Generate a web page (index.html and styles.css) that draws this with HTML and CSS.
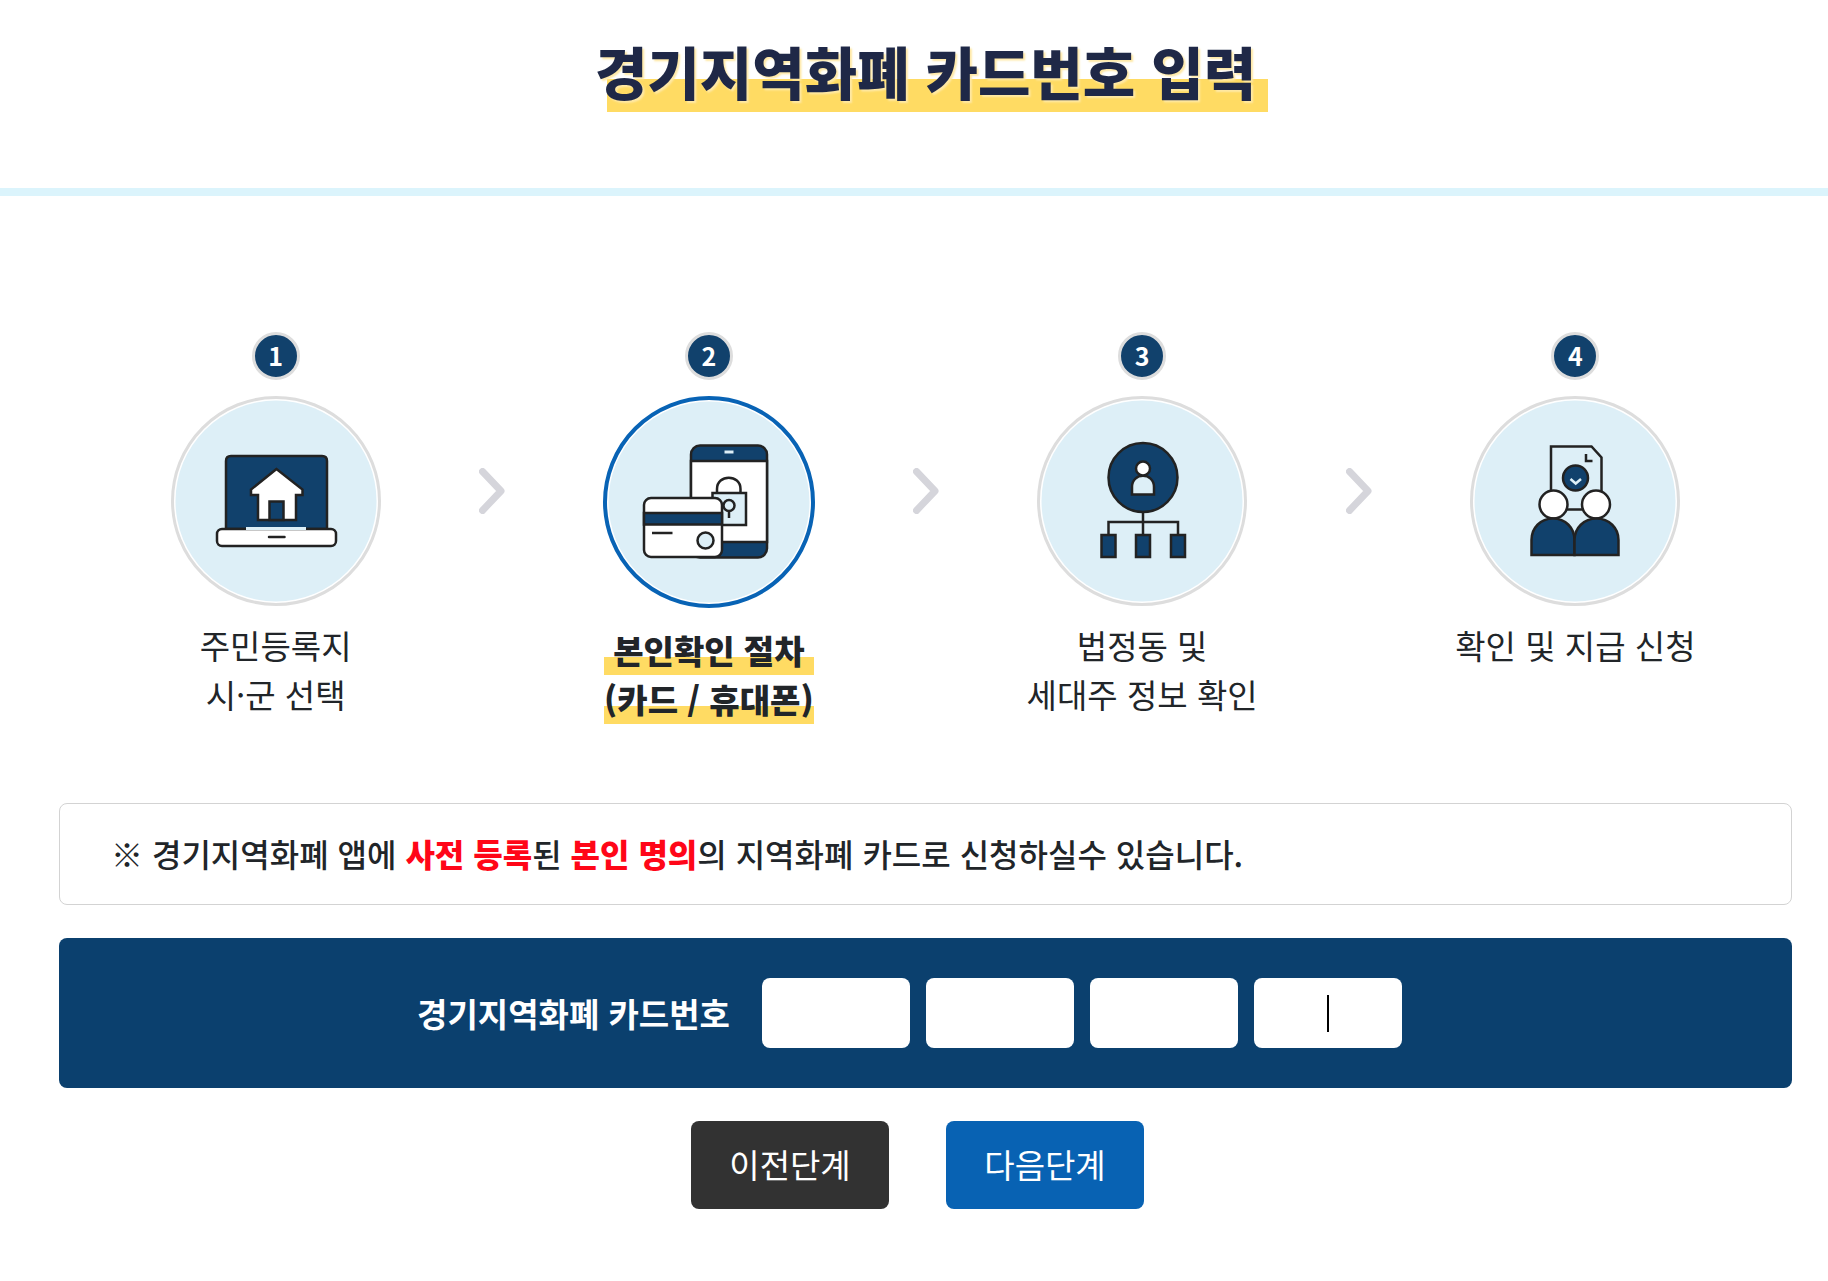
FILE: index.html
```html
<!DOCTYPE html>
<html lang="ko">
<head>
    <meta charset="UTF-8">
    <meta name="viewport" content="width=device-width, initial-scale=1.0">
    <title>경기지역화폐 카드번호 입력</title>
    <link rel="stylesheet" href="styles.css">
</head>
<body>
    <header class="page-header">
        <h1 class="page-title">경기지역화폐 카드번호 입력</h1>
    </header>

    <main class="container">
        <ol class="steps">
            <li class="step">
                <span class="step-num">1</span>
                <div class="step-icon">
                    <svg viewBox="0 0 204 204" aria-hidden="true">
                        <circle class="bg" cx="102" cy="102" r="100.500"/>
                        <path class="navy line" d="M52 130V62q0-5 5-5h91q5 0 5 5v68z"/>
                        <rect class="white line" x="43" y="130" width="119" height="17" rx="5"/>
                        <path d="M72 129.500h60" stroke="#ddeff7" stroke-width="3"/>
                        <path class="white line" d="M102.500 70L77 90.500V96h7v25h38V96h6.500v-5.500z"/>
                        <path class="navy line" d="M95.500 121v-18.500h14V121z"/>
                        <path class="line" d="M95 138h15.500" stroke-linecap="round"/>
                    </svg>
                </div>
                <p class="step-label">주민등록지<br>시·군 선택</p>
            </li>
            <li class="arrow" aria-hidden="true">
                <svg viewBox="0 0 26 46"><path d="M3.500 3.500L22 23 3.500 42.500"/></svg>
            </li>
            <li class="step active">
                <span class="step-num">2</span>
                <div class="step-icon">
                    <svg viewBox="0 0 204 204" aria-hidden="true">
                        <circle class="bg" cx="102" cy="102" r="100.500"/>
                        <rect class="navy line" x="84" y="45.500" width="76" height="112" rx="9"/>
                        <path class="white line" d="M84 61h76v81H84z"/>
                        <path d="M117.500 52h9" stroke="#ddeff7" stroke-width="3"/>
                        <path class="line" d="M110 93v-4c0-15 23.500-15 23.500 0v4"/>
                        <path class="sky line" d="M105.500 93H139v32h-33.500z"/>
                        <circle class="line" cx="122" cy="105.500" r="5.500"/>
                        <path class="line" d="M122 111v7"/>
                        <rect class="white line" x="37" y="98" width="78" height="59" rx="7"/>
                        <path class="navy line" d="M37 113h78v11.500H37z"/>
                        <path class="line" d="M45 133h20.500"/>
                        <circle class="sky line" cx="98.500" cy="140.500" r="8"/>
                    </svg>
                </div>
                <p class="step-label">본인확인 절차<br>(카드 / 휴대폰)</p>
            </li>
            <li class="arrow" aria-hidden="true">
                <svg viewBox="0 0 26 46"><path d="M3.500 3.500L22 23 3.500 42.500"/></svg>
            </li>
            <li class="step">
                <span class="step-num">3</span>
                <div class="step-icon">
                    <svg viewBox="0 0 204 204" aria-hidden="true">
                        <circle class="bg" cx="102" cy="102" r="100.500"/>
                        <circle class="navy line" cx="103" cy="78.500" r="34.500"/>
                        <path class="sky line" d="M92 95.500V88c0-15 22-15 22 0v7.500z"/>
                        <circle class="white line" cx="103" cy="69.500" r="7"/>
                        <path class="line" d="M103 113v23M68.500 136v-13H138v13"/>
                        <path class="navy line" d="M61.500 136h14v22h-14zM96 136h14v22H96zM131 136h14v22h-14z"/>
                    </svg>
                </div>
                <p class="step-label">법정동 및<br>세대주 정보 확인</p>
            </li>
            <li class="arrow" aria-hidden="true">
                <svg viewBox="0 0 26 46"><path d="M3.500 3.500L22 23 3.500 42.500"/></svg>
            </li>
            <li class="step">
                <span class="step-num">4</span>
                <div class="step-icon">
                    <svg viewBox="0 0 204 204" aria-hidden="true">
                        <circle class="bg" cx="102" cy="102" r="100.500"/>
                        <path class="line" d="M78 110.500V47.500h40.500l10 11v52z"/>
                        <path class="line" d="M113 55v7h6.500"/>
                        <circle class="navy line" cx="102.500" cy="79" r="12.500"/>
                        <path d="M97.500 80l5.200 4.500L108 80" fill="none" stroke="#ddeff7" stroke-width="2.500"/>
                        <circle class="white line" cx="80.500" cy="105.500" r="14"/>
                        <circle class="white line" cx="123" cy="105.500" r="14"/>
                        <path class="navy line" d="M58.500 156v-15c0-12 9-21.500 21.500-21.500S101.500 129 101.500 141v15z"/>
                        <path class="navy line" d="M101.500 156v-15c0-12 9.500-21.500 22-21.500s22 9.500 22 21.500v15z"/>
                    </svg>
                </div>
                <p class="step-label">확인 및 지급 신청</p>
            </li>
        </ol>

        <p class="notice">※ 경기지역화폐 앱에 <strong>사전 등록</strong>된 <strong>본인 명의</strong>의 지역화폐 카드로 신청하실수 있습니다.</p>

        <form id="cardForm">
            <div class="card-box">
                <label for="card1">경기지역화폐 카드번호</label>
                <div class="card-inputs">
                    <input type="text" id="card1" maxlength="4" inputmode="numeric">
                    <input type="text" id="card2" maxlength="4" inputmode="numeric" aria-label="카드번호 두번째 자리">
                    <input type="text" id="card3" maxlength="4" inputmode="numeric" aria-label="카드번호 세번째 자리">
                    <input type="text" id="card4" class="current" maxlength="4" inputmode="numeric" aria-label="카드번호 네번째 자리">
                </div>
            </div>
            <div class="buttons">
                <button type="button" class="btn btn-prev">이전단계</button>
                <button type="submit" class="btn btn-next">다음단계</button>
            </div>
        </form>
    </main>
</body>
</html>
```
FILE: styles.css
```css
* {
    box-sizing: border-box;
}
body {
    margin: 0;
    background: #fff;
    color: #212529;
    font-family: "Noto Sans CJK KR", sans-serif;
    font-size: 33px;
    line-height: 49px;
}
.page-header {
    padding: 26px 36px 74px 59px;
    border-bottom: 8px solid #dbf4fc;
    text-align: center;
}
.page-title {
    display: inline-block;
    position: relative;
    z-index: 0;
    margin: 0;
    vertical-align: top;
    color: #1f2847;
    font-size: 57px;
    font-weight: 900;
    line-height: 88px;
    text-shadow: 2px 2px 2px #ffe9a6;
}
.page-title::after {
    content: "";
    position: absolute;
    z-index: -1;
    left: 12px;
    bottom: 2px;
    width: 100%;
    height: 33px;
    background: #ffdb63;
}
.container {
    padding: 136px 36px 72px 59px;
}

/* steps */
.steps {
    display: flex;
    align-items: flex-start;
    margin: 0 0 79px;
    padding: 0;
    list-style: none;
}
.step {
    flex: 1;
    display: flex;
    flex-direction: column;
    align-items: center;
    text-align: center;
}
.step-num {
    width: 48px;
    height: 48px;
    margin-bottom: 16px;
    border: 3px solid #ddd;
    border-radius: 50%;
    background: #11416c;
    color: #fff;
    font-size: 25px;
    font-weight: 700;
    line-height: 40px;
}
.step-icon {
    width: 210px;
    height: 210px;
    margin-bottom: 15px;
    border: 3px solid #ddd;
    border-radius: 50%;
}
.step-icon svg {
    display: block;
    width: 100%;
}
.step-label {
    margin: 0;
}
.active .step-icon {
    width: 212px;
    height: 212px;
    margin-bottom: 18px;
    border: 4px solid #0863b5;
}
.active .step-label {
    font-weight: 900;
    background: linear-gradient(transparent 31px, #ffdb63 31px);
    background-size: 100% 49px;
}
.arrow {
    width: 26px;
    margin: 136px -13px 0;
}
.arrow svg {
    display: block;
    width: 100%;
    fill: none;
    stroke: #d5d5db;
    stroke-width: 7;
    stroke-linecap: round;
    stroke-linejoin: round;
}

/* step icons */
.line {
    stroke: #222;
    stroke-width: 2.5;
    fill: none;
}
.bg,
.sky {
    fill: #ddeff7;
}
.navy {
    fill: #11416c;
}
.white {
    fill: #fff;
}

.notice {
    margin: 0 0 33px;
    padding: 25px 51px 26px;
    border: 1px solid #d3d3d3;
    border-radius: 8px;
    font-size: 32px;
    font-weight: 500;
}
.notice strong {
    color: #ff0618;
    font-weight: 900;
}
.card-box {
    display: flex;
    justify-content: center;
    align-items: center;
    gap: 32px;
    margin-bottom: 33px;
    padding: 40px 32px 40px 0;
    border-radius: 8px;
    background: #0b406e;
    color: #fff;
    font-weight: 700;
}
.card-inputs {
    display: flex;
    gap: 16px;
}
.card-inputs input {
    width: 148px;
    height: 70px;
    padding: 0 12px;
    border: 0;
    border-radius: 8px;
    background: #fff;
    font: inherit;
    text-align: center;
}
.card-inputs .current {
    background: linear-gradient(#000, #000) center / 2px 37px no-repeat #fff;
}
.buttons {
    display: flex;
    justify-content: center;
    gap: 57px;
    padding-right: 16px;
}
.btn {
    width: 198px;
    height: 88px;
    padding: 0 0 2px;
    border: 0;
    border-radius: 8px;
    color: #fff;
    font: inherit;
    cursor: pointer;
}
.btn-prev {
    background: #323232;
}
.btn-next {
    background: #0862b3;
}
```
